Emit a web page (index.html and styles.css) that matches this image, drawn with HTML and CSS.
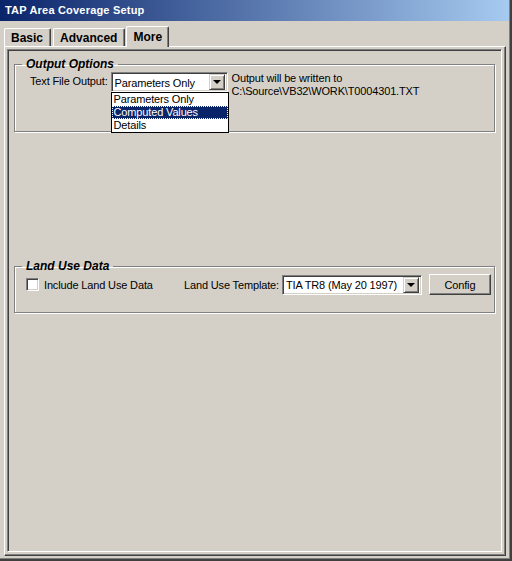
FILE: index.html
```html
<!DOCTYPE html>
<html lang="en">
<head>
    <meta charset="UTF-8">
    <title>TAP Area Coverage Setup</title>
    <link rel="stylesheet" href="styles.css">
</head>
<body>
    <div class="window">
        <div class="titlebar">TAP Area Coverage Setup</div>
        <div class="tabs">
            <div class="tab">Basic</div>
            <div class="tab">Advanced</div>
            <div class="tab active">More</div>
        </div>
        <div class="panel">
            <div class="inner">
                <fieldset class="group output">
                    <legend>Output Options</legend>
                    <div class="row">
                        <span class="label">Text File Output:</span>
                        <div class="combo small">
                            <span class="value">Parameters Only</span>
                            <span class="arrow"></span>
                            <ul class="list">
                                <li>Parameters Only</li>
                                <li class="selected">Computed Values</li>
                                <li>Details</li>
                            </ul>
                        </div>
                        <div class="note">
                            Output will be written to<br>
                            C:\Source\VB32\WORK\T0004301.TXT
                        </div>
                    </div>
                </fieldset>

                <fieldset class="group land">
                    <legend>Land Use Data</legend>
                    <div class="row">
                        <label class="check"><span class="box"></span>Include Land Use Data</label>
                        <span class="label template">Land Use Template:</span>
                        <div class="combo wide">
                            <span class="value">TIA TR8 (May 20 1997)</span>
                            <span class="arrow"></span>
                        </div>
                        <button class="btn">Config</button>
                    </div>
                </fieldset>
            </div>
        </div>
    </div>
</body>
</html>
```

FILE: styles.css
```css
*{
    box-sizing: border-box;
}

body{
    margin: 0;
    background-color: #d4d0c8;
    font-family: "Liberation Sans", Arial, sans-serif;
    font-size: 11px;
    letter-spacing: -0.15px;
    color: #000;
}

.window{
    width: 512px;
    height: 561px;
    background-color: #d4d0c8;
    border-right: 2px solid #404040;
    border-bottom: 2px solid #404040;
    box-shadow: inset -1px -1px 0 #808080;
    display: flex;
    flex-direction: column;
}

.titlebar{
    height: 21px;
    margin-right: 1px;
    background: linear-gradient(to right, #0a246a, #a6caf0);
    color: #fff;
    font-weight: bold;
    padding: 4px 0 0 5px;
    letter-spacing: 0.2px;
}

/* tab strip */
.tabs{
    display: flex;
    align-items: flex-end;
    height: 25px;
    padding-left: 4px;
    position: relative;
    z-index: 1;
}

.tab{
    height: 18px;
    padding: 2px 7px 0 6px;
    font-weight: bold;
    font-size: 12px;
    letter-spacing: 0;
    border-top: 1px solid #fff;
    border-left: 1px solid #fff;
    border-right: 1px solid #404040;
    border-radius: 2px 2px 0 0;
    box-shadow: inset -1px 0 0 #808080;
    margin-right: 2px;
    white-space: nowrap;
}

.tab.active{
    height: 21px;
    margin-bottom: -1px;
    margin-left: -1px;
    padding: 3px 6px 0 6px;
    background-color: #d4d0c8;
}

.panel{
    margin: 0 4px 3px 4px;
    flex: 1;
    border-top: 1px solid #fff;
    border-left: 1px solid #fff;
    border-right: 1px solid #404040;
    border-bottom: 1px solid #404040;
    box-shadow: inset -1px -1px 0 #808080;
    padding: 2px 3px 3px 2px;
    display: flex;
}

.inner{
    flex: 1;
    border-top: 1px solid #808080;
    border-left: 1px solid #808080;
    border-right: 1px solid #fff;
    border-bottom: 1px solid #fff;
    box-shadow: inset 1px 1px 0 #404040;
    padding: 7px 6px 0 6px;
}

/* group boxes */
.group{
    margin: 0;
    border: 1px solid #808080;
    box-shadow: 1px 1px 0 #fff, inset 1px 1px 0 #fff;
    padding: 0 0 0 7px;
}

.group legend{
    font-weight: bold;
    font-style: italic;
    font-size: 12px;
    letter-spacing: 0;
    padding: 0 4px;
}

.output{
    height: 75px;
}

.land{
    height: 54px;
    margin-top: 127px;
}

.row{
    display: flex;
    align-items: flex-start;
    white-space: nowrap;
}

.output .row{
    padding-top: 1px;
    padding-left: 8px;
}

.label{
    padding-top: 3px;
    margin-right: 3px;
}

.combo{
    position: relative;
    height: 20px;
    background-color: #fff;
    border-top: 1px solid #808080;
    border-left: 1px solid #808080;
    border-right: 1px solid #fff;
    border-bottom: 1px solid #fff;
    box-shadow: inset 1px 1px 0 #404040, inset -1px -1px 0 #d4d0c8;
    display: flex;
    align-items: center;
    padding: 0 2px 0 3px;
}

.combo .value{
    flex: 1;
    padding-top: 1px;
}

.small{
    width: 117px;
}

.wide{
    width: 140px;
}

.arrow{
    width: 16px;
    height: 16px;
    background-color: #d4d0c8;
    border-top: 1px solid #d4d0c8;
    border-left: 1px solid #d4d0c8;
    border-right: 1px solid #404040;
    border-bottom: 1px solid #404040;
    box-shadow: inset 1px 1px 0 #fff, inset -1px -1px 0 #808080;
    position: relative;
}

.arrow::after{
    content: "";
    position: absolute;
    left: 3px;
    top: 5px;
    border-left: 4px solid transparent;
    border-right: 4px solid transparent;
    border-top: 4px solid #000;
}

/* open dropdown */
.list{
    position: absolute;
    top: 19px;
    left: -1px;
    width: 118px;
    margin: 0;
    padding: 0;
    list-style: none;
    background-color: #fff;
    border: 1px solid #000;
    z-index: 2;
}

.list li{
    height: 13px;
    line-height: 13px;
    padding-left: 2px;
}

.list li.selected{
    background-color: #0a246a;
    color: #fff;
    outline: 1px dotted #fff;
    outline-offset: -1px;
}

.note{
    margin-left: 4px;
    line-height: 13px;
}

/* land use */
.land .row{
    padding-top: 1px;
    padding-left: 4px;
    align-items: center;
}

.check{
    display: flex;
    align-items: center;
    width: 158px;
}

.box{
    width: 13px;
    height: 13px;
    background-color: #fff;
    border-top: 1px solid #808080;
    border-left: 1px solid #808080;
    border-right: 1px solid #fff;
    border-bottom: 1px solid #fff;
    box-shadow: inset 1px 1px 0 #404040, inset -1px -1px 0 #d4d0c8;
    margin-right: 5px;
}

.template{
    padding-top: 0;
    margin-right: 3px;
}

.btn{
    margin-left: 7px;
    width: 62px;
    height: 21px;
    font-family: inherit;
    font-size: 11px;
    letter-spacing: inherit;
    background-color: #d4d0c8;
    border-top: 1px solid #fff;
    border-left: 1px solid #fff;
    border-right: 1px solid #404040;
    border-bottom: 1px solid #404040;
    box-shadow: inset -1px -1px 0 #808080;
    padding: 0;
}
```
